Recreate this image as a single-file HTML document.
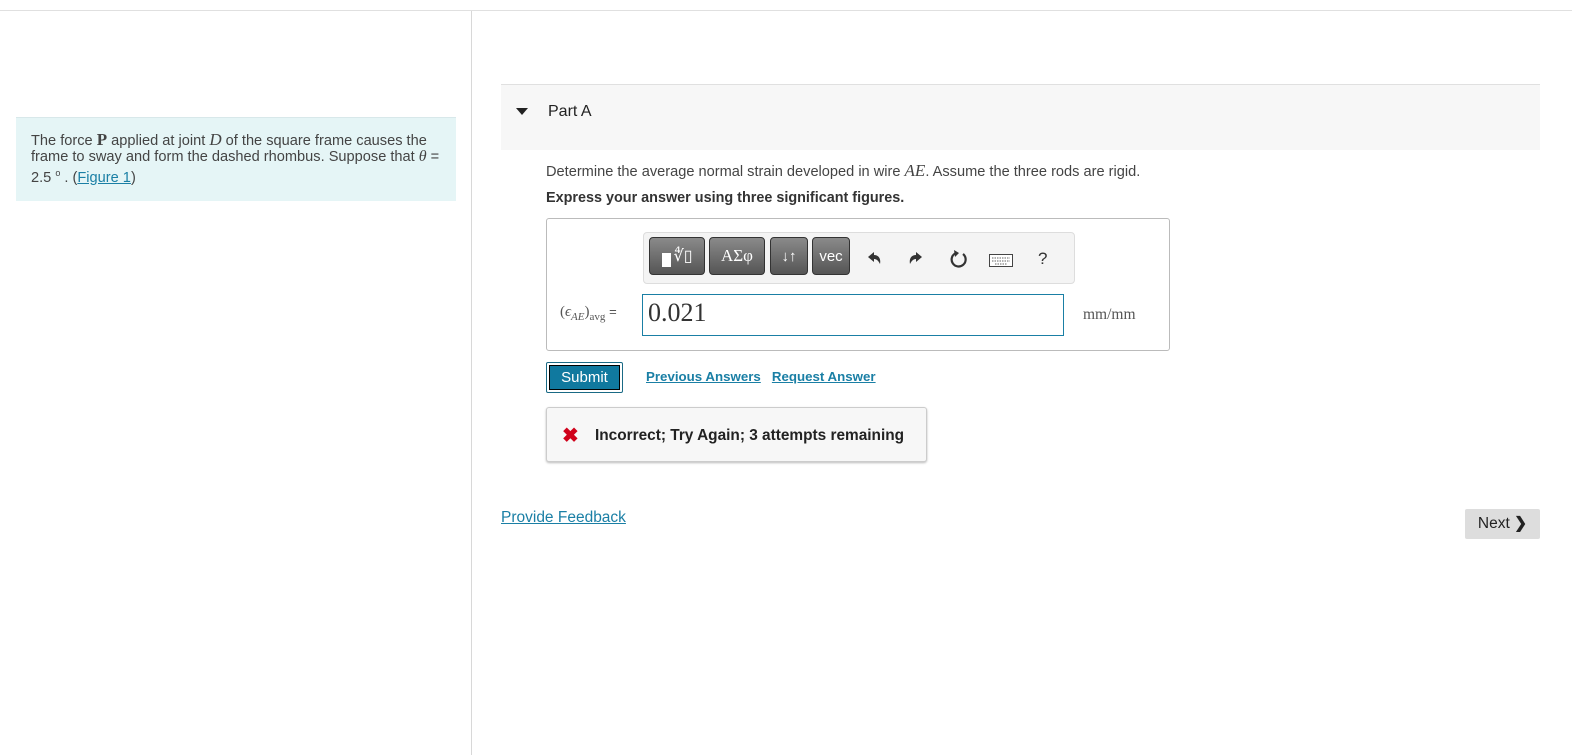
<!DOCTYPE html>
<html><head><style>
body{margin:0;width:1572px;height:755px;background:#fff;font-family:"Liberation Sans",sans-serif;color:#333;position:relative;overflow:hidden}
.a{position:absolute}
.btn{position:absolute;top:237px;height:38px;background:linear-gradient(#8a8a8a,#555);border:1px solid #333;border-radius:4px;color:#fff;display:flex;align-items:center;justify-content:center;box-sizing:border-box}
a{color:#1a7fa5}
</style></head><body>
<div class="a" style="left:0;top:10px;width:1572px;border-top:1px solid #e0e0e0"></div>
<div class="a" style="left:471px;top:11px;height:744px;border-left:1px solid #d8d8d8"></div>
<div class="a" style="left:16px;top:117px;width:440px;height:83px;background:#e5f5f6;border-top:1px solid #d8e8ea"></div>
<div class="a" style="left:31px;top:132px;width:420px;font-size:14.6px;line-height:16px;color:#444">The force <b style="font-family:'Liberation Serif',serif;font-size:17px">P</b> applied at joint <i style="font-family:'Liberation Serif',serif;font-size:17px">D</i> of the square frame causes the frame to sway and form the dashed rhombus. Suppose that <i style="font-family:'Liberation Serif',serif;font-size:16px">θ</i> = 2.5 <sup style="font-size:9px">o</sup> . (<a href="#">Figure 1</a>)</div>
<div class="a" style="left:501px;top:84px;width:1039px;height:65px;background:#f7f7f7;border-top:1px solid #e0e0e0"></div>
<div class="a" style="left:516px;top:108px;width:0;height:0;border-left:6px solid transparent;border-right:6px solid transparent;border-top:7px solid #222"></div>
<div class="a" style="left:548px;top:103px;font-size:16px;color:#222">Part A</div>
<div class="a" style="left:546px;top:161px;font-size:14.6px;color:#444">Determine the average normal strain developed in wire <i style="font-family:'Liberation Serif',serif;font-size:17px">AE</i>. Assume the three rods are rigid.</div>
<div class="a" style="left:546px;top:190px;font-size:14.4px;font-weight:bold;color:#333">Express your answer using three significant figures.</div>
<div class="a" style="left:546px;top:218px;width:622px;height:131px;border:1px solid #bbb;border-radius:3px"></div>
<div class="a" style="left:643px;top:232px;width:430px;height:50px;background:#f4f4f4;border:1px solid #ddd;border-radius:4px"></div>
<div class="btn" style="left:649px;width:56px"><span style="display:inline-block;width:9px;height:14px;background:#fff;margin-top:8px;margin-right:3px"></span><span style="font-size:16px">∜▯</span></div>
<div class="btn" style="left:709px;width:56px;font-family:'Liberation Serif',serif;font-size:17px">ΑΣφ</div>
<div class="btn" style="left:770px;width:38px;font-size:15px">↓↑</div>
<div class="btn" style="left:812px;width:38px;font-size:15px">vec</div>
<svg class="a" style="left:866px;top:250px" width="16" height="16"><path d="M2 7 L8 2 V5 C13 5 15 9 14 14 C12 10 10 9 8 9 V12 Z" fill="#333"/></svg>
<svg class="a" style="left:908px;top:250px" width="16" height="16"><path d="M14 7 L8 2 V5 C3 5 1 9 2 14 C4 10 6 9 8 9 V12 Z" fill="#333"/></svg>
<svg class="a" style="left:949px;top:249px" width="20" height="20"><path d="M7 4 A7 7 0 1 0 14 5" stroke="#333" stroke-width="2.2" fill="none"/><path d="M5 1 L10 4 L6 8 Z" fill="#333"/></svg>
<svg class="a" style="left:989px;top:254px" width="24" height="13"><rect x="0.5" y="0.5" width="23" height="12" fill="#fff" stroke="#444"/><path d="M3 4h18M3 7h18M6 10h12" stroke="#666" stroke-dasharray="1.5 1"/></svg>
<div class="a" style="left:1038px;top:249px;font-size:17px;color:#333">?</div>
<div class="a" style="left:560px;top:304px;font-family:'Liberation Serif',serif;font-size:15px;color:#555">(<i>ϵ<sub style="font-size:11px">AE</sub></i>)<sub style="font-size:11px">avg</sub> <span style="font-family:'Liberation Sans';font-size:13px">=</span></div>
<div class="a" style="left:642px;top:294px;width:422px;height:42px;border:1px solid #1a7fa5;box-sizing:border-box"></div>
<div class="a" style="left:648px;top:298px;font-family:'Liberation Serif',serif;font-size:26px;color:#333">0.021</div>
<div class="a" style="left:1083px;top:306px;font-family:'Liberation Serif',serif;font-size:15.5px;color:#555">mm/mm</div>
<div class="a" style="left:546px;top:362px;width:77px;height:31px;border:1px solid #1a6a85;border-radius:2px;box-sizing:border-box;padding:2px"><div style="background:#10799f;border:1px solid #000;height:100%;box-sizing:border-box;color:#fff;font-size:15px;text-align:center;line-height:23px">Submit</div></div>
<div class="a" style="left:646px;top:369px;font-size:13.3px;font-weight:bold"><a href="#">Previous Answers</a>&nbsp;&nbsp;&nbsp;<a href="#">Request Answer</a></div>
<div class="a" style="left:546px;top:407px;width:379px;height:53px;background:#f7f7f7;border:1px solid #ccc;border-radius:3px;box-shadow:0 1px 2px #bbb"></div>
<div class="a" style="left:562px;top:423px;font-size:20px;font-weight:bold;color:#d0021b">✖</div>
<div class="a" style="left:595px;top:427px;font-size:15.4px;font-weight:bold;color:#222">Incorrect; Try Again; 3 attempts remaining</div>
<div class="a" style="left:501px;top:509px;font-size:15.5px"><a href="#">Provide Feedback</a></div>
<div class="a" style="left:1465px;top:509px;width:75px;height:30px;background:#ddd;border-radius:2px;font-size:15.5px;color:#222;line-height:30px;text-align:center">Next <b>❯</b></div>
</body></html>
